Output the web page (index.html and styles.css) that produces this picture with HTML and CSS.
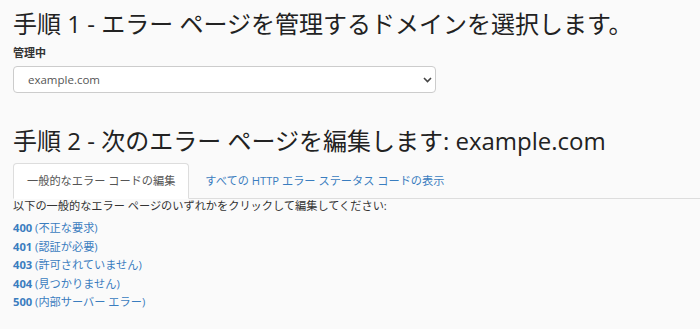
FILE: index.html
```html
<!DOCTYPE html>
<html lang="ja">
<head>
  <meta charset="UTF-8">
  <meta name="viewport" content="width=device-width, initial-scale=1.0">
  <title>エラー ページ</title>
  <link rel="stylesheet" href="styles.css">
</head>
<body>

  <section class="step">
    <h1 class="step-title">手順 1 - エラー ページを管理するドメインを選択します。</h1>
    <div class="form-group">
      <label for="domain" class="field-label">管理中</label>
      <div class="select-wrap">
        <select id="domain" class="domain-select">
          <option>example.com</option>
        </select>
        <svg class="select-caret" width="9" height="6" viewBox="0 0 9 6"><path d="M1 1l3.5 3.5L8 1" fill="none" stroke="#444" stroke-width="1.6"/></svg>
      </div>
    </div>
  </section>

  <section class="step step-two">
    <h2 class="step-title">手順 2 - 次のエラー ページを編集します: example.com</h2>
    <ul class="tabs">
      <li class="tab active"><a href="#">一般的なエラー コードの編集</a></li>
      <li class="tab"><a href="#">すべての HTTP エラー ステータス コードの表示</a></li>
    </ul>
    <div class="tab-content">
      <p class="hint">以下の一般的なエラー ページのいずれかをクリックして編集してください:</p>
      <ul class="code-list">
        <li><a href="#"><strong>400</strong> (不正な要求)</a></li>
        <li><a href="#"><strong>401</strong> (認証が必要)</a></li>
        <li><a href="#"><strong>403</strong> (許可されていません)</a></li>
        <li><a href="#"><strong>404</strong> (見つかりません)</a></li>
        <li><a href="#"><strong>500</strong> (内部サーバー エラー)</a></li>
      </ul>
    </div>
  </section>

</body>
</html>
```

FILE: styles.css
```css
/* General Styles */
body {
  font-family: "Open Sans", "Noto Sans CJK JP", sans-serif;
  font-size: 11.2px;
  margin: 0;
  padding: 0;
  background-color: #fafafa;
  color: #333;
}

a {
  color: #3a7dbf;
  text-decoration: none;
}

/* Steps */
.step {
  padding: 0 13px;
}

.step-title {
  font-size: 24px;
  font-weight: 400;
  line-height: 26px;
  margin: 11px 0 9px;
  color: #222;
}

.step-two .step-title {
  margin-top: 35px;
}

.field-label {
  display: block;
  font-weight: bold;
  font-size: 11px;
  line-height: 14px;
  margin-bottom: 6px;
}

.select-wrap {
  position: relative;
  width: 423px;
}

.domain-select {
  appearance: none;
  -webkit-appearance: none;
  width: 100%;
  height: 27px;
  padding: 0 14px;
  font-family: inherit;
  font-size: 11.5px;
  color: #555;
  background: #fff;
  border: 1px solid #ccc;
  border-radius: 4px;
}

.select-caret {
  position: absolute;
  right: 4px;
  top: 11px;
  pointer-events: none;
}

/* Tabs */
.tabs {
  display: flex;
  list-style: none;
  margin: 0 -13px 0 0;
  padding: 0;
  border-bottom: 1px solid #ddd;
}

.tab {
  margin-right: 2px;
  margin-bottom: -1px;
}

.tab a {
  display: block;
  padding: 10px 13px;
  line-height: 14px;
  border: 1px solid transparent;
  border-radius: 4px 4px 0 0;
}

.tab.active a {
  color: #555;
  background: #fff;
  border-color: #ddd #ddd transparent;
}

.hint {
  margin: 0;
  line-height: 13px;
}

.code-list {
  list-style: none;
  margin: 7px 0 0;
  padding: 0;
}

.code-list li {
  line-height: 18.6px;
}
```
